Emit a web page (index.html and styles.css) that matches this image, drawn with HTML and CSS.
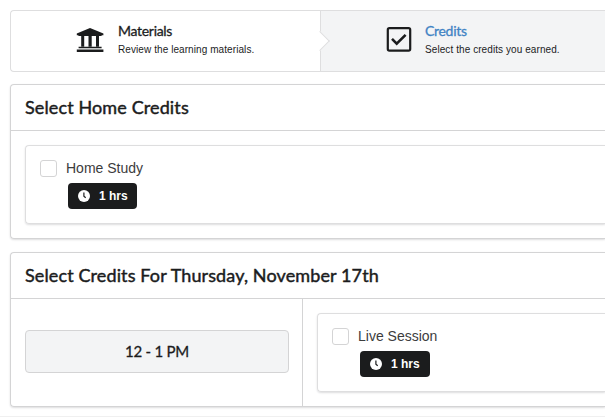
FILE: index.html
```html
<!DOCTYPE html>
<html lang="en">
<head>
    <meta charset="UTF-8">
    <meta name="viewport" content="width=device-width, initial-scale=1.0">
    <title>Select Credits</title>
    <link rel="stylesheet" href="styles.css">
</head>
<body>
    <div class="page">
        <!-- Steps -->
        <div class="steps">
            <a class="step">
                <svg class="step-icon" viewBox="0 0 28 28">
                    <path d="M14 2L27.4 7.4V9.2H25.6V10H2.4V9.2H0.8V7.4Z"/>
                    <path d="M5.2 9.8H8.2V20.8H5.2ZM12.5 9.8H15.7V20.8H12.5ZM20 9.8H23V20.8H20Z"/>
                    <path d="M2.6 20.8H25.6V22.2H2.6ZM0.8 23.6H27.4V26H0.8Z"/>
                </svg>
                <div class="step-content">
                    <div class="step-title">Materials</div>
                    <div class="step-description">Review the learning materials.</div>
                </div>
            </a>
            <a class="step active">
                <svg class="step-icon" viewBox="0 0 28 28">
                    <rect x="1.8" y="2.2" width="22.4" height="22.4" rx="1.6" fill="none" stroke="#1b1c1d" stroke-width="2.2"/>
                    <path d="M6 12.8L10.7 17.6L19.6 8.8" fill="none" stroke="#1b1c1d" stroke-width="2.6"/>
                </svg>
                <div class="step-content">
                    <div class="step-title">Credits</div>
                    <div class="step-description">Select the credits you earned.</div>
                </div>
            </a>
        </div>

        <!-- Home Credits -->
        <div class="panel">
            <h3>Select Home Credits</h3>
            <div class="panel-body">
                <div class="credit">
                    <label class="checkbox"><input type="checkbox"><span>Home Study</span></label>
                    <div class="hours">
                        <svg class="clock" viewBox="0 0 12 12">
                            <circle cx="6" cy="6" r="6" fill="#fff"/>
                            <path d="M5.9 2.6V6.2L7.7 7.8" fill="none" stroke="#1b1c1d" stroke-width="1.2"/>
                        </svg>
                        1 hrs
                    </div>
                </div>
            </div>
        </div>

        <!-- Day Credits -->
        <div class="panel">
            <h3>Select Credits For Thursday, November 17th</h3>
            <div class="panel-row">
                <div class="time-column">
                    <div class="time">12 - 1 PM</div>
                </div>
                <div class="panel-body">
                    <div class="credit">
                        <label class="checkbox"><input type="checkbox"><span>Live Session</span></label>
                        <div class="hours">
                            <svg class="clock" viewBox="0 0 12 12">
                                <circle cx="6" cy="6" r="6" fill="#fff"/>
                                <path d="M5.9 2.6V6.2L7.7 7.8" fill="none" stroke="#1b1c1d" stroke-width="1.2"/>
                            </svg>
                            1 hrs
                        </div>
                    </div>
                </div>
            </div>
        </div>
        <div class="page-end"></div>
    </div>
</body>
</html>
```

FILE: styles.css
```css
/* General Styling */
* {
    margin: 0;
    padding: 0;
    box-sizing: border-box;
}

body {
    background-color: #fff;
    color: #1b1c1d;
    font-family: "Liberation Sans", Arial, sans-serif;
    font-size: 14px;
    overflow: hidden;
}

.page {
    padding-top: 10px;
}

/* Steps */
.steps {
    display: flex;
    height: 62px;
    margin: 0 0 12px 10px;
    border: 1px solid #dededf;
    border-right: none;
    border-radius: 4px 0 0 4px;
}

.step {
    position: relative;
    display: flex;
    width: 310px;
    flex-shrink: 0;
    padding: 12px 0 0 65px;
    border-right: 1px solid #dededf;
}

.step.active {
    width: auto;
    flex: 1;
    border-right: none;
    background-color: #f3f4f5;
}

/* Arrow between two steps */
.step:first-child::after {
    content: "";
    position: absolute;
    z-index: 1;
    top: 23px;
    right: -7px;
    width: 13px;
    height: 13px;
    background-color: #fff;
    border: 1px solid #dededf;
    border-width: 1px 1px 0 0;
    transform: rotate(45deg);
}

.step-icon {
    width: 28px;
    height: 28px;
    margin: 3px 14px 0 0;
    fill: #1b1c1d;
}

.step.active .step-icon {
    margin-right: 11px;
}

.step-title {
    font-family: Lato, sans-serif;
    font-size: 14px;
    font-weight: 400;
    letter-spacing: -0.3px;
    line-height: 16px;
    -webkit-text-stroke: 0.3px;
}

.active .step-title {
    color: #4183c4;
}

.step-description {
    margin-top: 4px;
    font-size: 10px;
    letter-spacing: 0.08px;
    line-height: 13px;
}

/* Panels */
.panel {
    height: 155px;
    margin: 0 0 13px 10px;
    border: 1px solid #d4d4d5;
    border-right: none;
    border-radius: 4px 0 0 4px;
    box-shadow: 0 1px 2px rgba(34, 36, 38, 0.15);
}

.panel h3 {
    height: 46px;
    padding-left: 14px;
    border-bottom: 1px solid #d4d4d5;
    font-family: Lato, sans-serif;
    font-size: 18px;
    font-weight: 400;
    letter-spacing: 0.12px;
    line-height: 44px;
    -webkit-text-stroke: 0.45px;
}

.panel-body {
    flex: 1;
    padding: 14px 0 14px 14px;
}

.panel-row {
    display: flex;
    height: 107px;
}

.time-column {
    width: 292px;
    padding: 31px 13px 0 14px;
    border-right: 1px solid #d4d4d5;
}

.time {
    width: 264px;
    height: 43px;
    border: 1px solid #d4d4d5;
    border-radius: 4px;
    background-color: #f3f4f5;
    font-family: Lato, sans-serif;
    font-size: 15px;
    font-weight: 400;
    letter-spacing: -0.25px;
    line-height: 41px;
    text-align: center;
    -webkit-text-stroke: 0.3px;
}

/* Credit card */
.credit {
    height: 79px;
    padding: 14px;
    border: 1px solid #dededf;
    border-right: none;
    border-radius: 4px 0 0 4px;
    box-shadow: 0 1px 2px rgba(34, 36, 38, 0.15);
}

.checkbox {
    display: flex;
    align-items: center;
    height: 17px;
    color: #3c3c3d;
    font-size: 14px;
}

.checkbox span {
    padding-bottom: 2px;
}

.checkbox input {
    appearance: none;
    width: 17px;
    height: 17px;
    margin-right: 9px;
    border: 1px solid #d4d4d5;
    border-radius: 3px;
    background-color: #fff;
}

.hours {
    display: flex;
    align-items: center;
    width: 69px;
    height: 26px;
    margin: 6px 0 0 28px;
    padding-left: 10px;
    border-radius: 4px;
    background-color: #1b1c1d;
    color: #fff;
    font-size: 12px;
    font-weight: 700;
}

.panel-row .hours {
    width: 70px;
}

.clock {
    width: 12px;
    height: 12px;
    margin-right: 9px;
}

.page-end {
    margin-top: -4px;
    border-top: 1px solid #f0f0f0;
}
```
